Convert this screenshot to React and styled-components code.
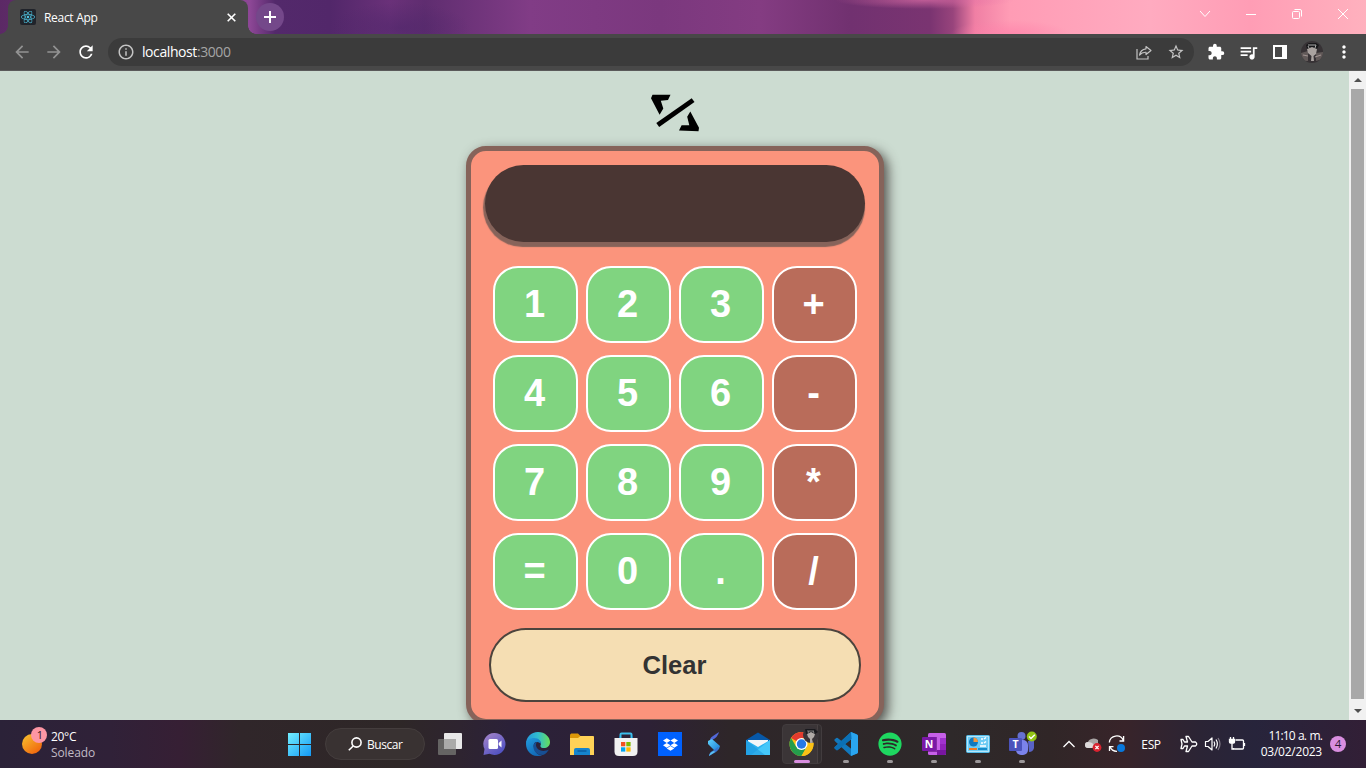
import React from "react";
import styled, { createGlobalStyle } from "styled-components";
import {
  MdExtension,
  MdQueueMusic,
  MdRefresh,
  MdArrowBack,
  MdArrowForward,
  MdInfoOutline,
  MdStarBorder,
  MdMoreVert,
} from "react-icons/md";
import { FaReact, FaSpotify, FaDropbox } from "react-icons/fa";

const GlobalStyle = createGlobalStyle`
  * { box-sizing: border-box; }
  body { margin: 0; overflow: hidden; }
  button { font: inherit; padding: 0; }
  svg { display: block; flex: none; }
`;

const Screen = styled.div`
  display: flex;
  flex-direction: column;
  width: 1366px;
  height: 768px;
  overflow: hidden;
  font-family: "Open Sans", "Noto Sans", sans-serif;
`;

/* ---------- browser chrome ---------- */

const TitleBar = styled.header`
  display: flex;
  align-items: flex-end;
  height: 34px;
  padding-left: 8px;
  background:
    radial-gradient(ellipse 60px 14px at 1010px 34px, #ff80a9aa, #ff80a900),
    radial-gradient(ellipse 90px 9px at 925px 0, #e070a8aa, #e070a800),
    radial-gradient(ellipse 70px 26px at 400px 28px, #4a256888, #4a256800),
    linear-gradient(90deg, #5b2965 0, #8d4796 250px, #53296b 275px, #52276a 330px, #6a3179 390px,
      #5f2d70 425px, #813c86 530px, #7b387e 660px, #843c82 760px, #713170 850px, #7a3471 930px,
      #98447c 953px, #f07fa4 975px, #ff9cb5 1010px, #ffabc0 1150px, #ff9db5 1250px, #ffb1be 1366px);
`;

const Tab = styled.div`
  position: relative;
  display: flex;
  align-items: center;
  width: 240px;
  height: 34px;
  padding: 0 12px 0 12px;
  border-radius: 8px 8px 0 0;
  background: #484848;
  color: #fff;
  font-size: 12px;

  &::before,
  &::after {
    content: "";
    position: absolute;
    bottom: 0;
    width: 8px;
    height: 8px;
  }
  &::before {
    left: -8px;
    background: radial-gradient(circle at 0 0, transparent 7.5px, #484848 8px);
  }
  &::after {
    right: -8px;
    background: radial-gradient(circle at 100% 0, transparent 7.5px, #484848 8px);
  }
`;

const Favicon = styled.span`
  display: grid;
  place-items: center;
  width: 16px;
  height: 16px;
  margin-right: 8px;
  border-radius: 2px;
  background: #20232a;
  color: #4fc3e0;
`;

const TabTitle = styled.span`
  flex: 1;
  letter-spacing: -0.3px;
`;

const NewTab = styled.span`
  display: grid;
  place-items: center;
  width: 28px;
  height: 28px;
  margin: 0 0 3px 8px;
  border-radius: 50%;
  background: #74488a;
`;

const WindowControls = styled.div`
  display: flex;
  align-self: flex-start;
  height: 28px;
  margin-left: auto;
`;

const WindowControl = styled.span`
  display: grid;
  place-items: center;
  width: 46px;
  height: 28px;
`;

const Toolbar = styled.div`
  display: flex;
  align-items: center;
  height: 37px;
  padding: 0 6px 0 12px;
  border-bottom: 1px solid #5a5a5a;
  background: #484848;
  color: #fff;
`;

const NavButton = styled.span`
  display: grid;
  place-items: center;
  width: 20px;
  height: 20px;
  margin-right: 12px;
  color: ${(p) => (p.$dim ? "#929292" : "#fff")};
`;

const AddressBar = styled.div`
  display: flex;
  flex: none;
  align-items: center;
  width: 1086px;
  height: 28px;
  padding: 0 9px 0 9px;
  border-radius: 14px;
  background: #3b3b3b;
  color: #c4c4c4;
`;

const Address = styled.span`
  flex: 1;
  margin: -1px 0 0 7px;
  font-size: 14px;
  letter-spacing: -0.42px;
  color: #fff;
  span { color: #a5a5a5; }
`;

const BarIcon = styled.span`
  display: grid;
  flex: none;
  place-items: center;
  width: 32px;
  height: 24px;
`;

const ShareButton = styled(BarIcon)`
  margin-right: 7px;
`;

const BarActions = styled.div`
  display: flex;
  margin-left: 6px;
`;

const Avatar = styled.span`
  display: block;
  width: 22px;
  height: 22px;
  border-radius: 50%;
  overflow: hidden;
`;

/* ---------- page ---------- */

const Viewport = styled.div`
  display: flex;
  height: 649px;
  overflow: hidden;
`;

const Page = styled.main`
  display: flex;
  flex: 1;
  flex-direction: column;
  align-items: center;
  padding: 23px 0 0 1px;
  background: #ccdcd1;
  overflow: hidden;
`;

const Scrollbar = styled.div`
  display: flex;
  flex-direction: column;
  align-items: center;
  width: 17px;
  background: #f1f1f1;
`;

const ScrollArrow = styled.span`
  display: grid;
  flex: none;
  place-items: center;
  width: 17px;
  height: ${(p) => (p.$end ? 21 : 18)}px;
  padding-top: ${(p) => (p.$end ? 3 : 0)}px;
`;

const ScrollThumb = styled.span`
  flex: none;
  width: 13px;
  height: 610px;
  background: #a8a8a8;
`;

const Calculator = styled.section`
  display: flex;
  flex: none;
  flex-direction: column;
  align-items: center;
  width: 418px;
  height: 578px;
  margin-top: 14px;
  padding-top: 14px;
  border: 5px solid #86635a;
  border-radius: 20px;
  background: #fb947c;
  box-shadow: 4px 4px 12px rgba(55, 50, 48, 0.8);
  font-family: "Liberation Sans", Arial, sans-serif;
`;

const Display = styled.div`
  flex: none;
  width: 380px;
  height: 77px;
  border-radius: 40px;
  background: #4a3633;
  box-shadow: -1px 4px 1px 1px #86635a;
`;

const Keys = styled.div`
  display: grid;
  grid-template-columns: repeat(4, 85px);
  grid-auto-rows: 77px;
  gap: 12px 8px;
  margin-top: 24px;
`;

const Key = styled.button`
  padding-right: 2px;
  border: 2px solid #fff;
  border-radius: 25px;
  background: ${(p) => (p.$operator ? "#b96c5a" : "#80d480")};
  color: #fff;
  font-size: 38px;
  font-weight: 700;
`;

const ClearButton = styled.button`
  flex: none;
  width: 372px;
  height: 74px;
  margin-top: 18px;
  padding-right: 1px;
  border: 2px solid #4c443d;
  border-radius: 37px;
  background: #f5deb3;
  color: #333;
  font-size: 25.6px;
  font-weight: 700;
`;

/* ---------- taskbar ---------- */

const Taskbar = styled.footer`
  display: flex;
  align-items: center;
  height: 48px;
  padding-right: 20px;
  background: linear-gradient(90deg, #2b2238 0, #302138 110px, #361f34 180px, #30262a 240px,
    #2e2727 400px, #2e2430 460px, #2b2139 510px, #2d2135 650px, #2e2629 730px, #2e292a 950px,
    #302627 1050px, #38242a 1125px, #2b2435 1200px, #27243b 1255px, #321f36 1366px);
  color: #fff;
`;

const Weather = styled.div`
  display: flex;
  align-items: center;
  width: 277px;
  padding-left: 20px;
`;

const WeatherText = styled.div`
  margin: 2px 0 0 3px;
  font-size: 12px;
  line-height: 16px;
  div:first-child { letter-spacing: -0.3px; }
  div:last-child { color: #c1bac6; letter-spacing: -0.1px; }
`;

const TaskItem = styled.span`
  position: relative;
  display: grid;
  place-items: center;
  width: 44px;
  height: 48px;

  &::after {
    content: "";
    display: ${(p) => (p.$running || p.$active ? "block" : "none")};
    position: absolute;
    bottom: 5px;
    left: calc(50% - ${(p) => (p.$active ? 8 : 3)}px);
    width: ${(p) => (p.$active ? 16 : 6)}px;
    height: 3px;
    border-radius: 2px;
    background: ${(p) => (p.$active ? "#d98ee0" : "#9b9799")};
  }
`;

const ActiveTile = styled.span`
  display: grid;
  place-items: center;
  width: 40px;
  height: 40px;
  border: 1px solid #423c3e;
  border-radius: 4px;
  background: linear-gradient(90deg, #3b3537 34px, #484143 34px, #484143 35px, #332e30 35px);
`;

const SearchBox = styled.div`
  display: flex;
  align-items: center;
  width: 100px;
  height: 32px;
  margin: 0 3px 0 4px;
  padding-left: 22px;
  border: 1px solid #443d3d;
  border-radius: 16px;
  background: #393232;
  font-size: 12px;
  letter-spacing: -0.45px;
  span { margin-left: 5px; }
`;

const Tray = styled.div`
  display: flex;
  align-items: center;
  margin-left: 13px;
`;

const TrayIcon = styled.span`
  display: grid;
  place-items: center;
  width: 24px;
  height: 24px;
`;

const Language = styled.span`
  width: 44px;
  margin-right: 4px;
  font-size: 12px;
  letter-spacing: -0.4px;
  text-align: center;
`;

const Clock = styled.div`
  margin-left: auto;
  font-size: 12px;
  line-height: 16px;
  text-align: right;
  div:first-child { letter-spacing: -0.85px; word-spacing: 1px; }
  div:last-child { letter-spacing: -0.24px; }
`;

const NoticeCount = styled.span`
  display: grid;
  place-items: center;
  width: 16px;
  height: 16px;
  margin-left: 8px;
  border-radius: 50%;
  background: #d98ee0;
  color: #2b1830;
  font-size: 11.5px;
  line-height: 16px;
`;

/* ---------- drawings ---------- */

const CatPicture = ({ size }) => (
  <svg width={size} height={size} viewBox="0 0 22 22">
    <rect width="22" height="22" fill="#373235" />
    <path d="M0 12L7 10V20H0zM15 12L22 11V18L15 20z" fill="#625a59" />
    <path d="M5 4L8 2H15L18 4L16 8L6 8z" fill="#171719" />
    <path d="M7 4H15M7 5L8 7M15 4L14 7" stroke="#aaa" strokeWidth="1" />
    <path d="M6 8L11 6L16 8L15 13L12.5 15L13 20H10L10.5 15L7 12z" fill="#aaa3a0" />
    <path d="M2 14L7 15M14 16L20 14" stroke="#a09391" strokeWidth="1.2" />
  </svg>
);

const Logo = () => (
  <svg width="48" height="38" viewBox="0 0 48 38" fill="#000">
    <path d="M1.5 0.8H19.5L17 6L9.8 6.700L12.300 14.500L8.600 20.800L0 4.200z" />
    <path d="M39.300 17.600L48 33.800L47.500 37.200L28 36.400L30.600 31.300H38.300L36.200 22.800z" />
    <path d="M5.300 29L40.700 4.200L43.500 8.100L8.200 33z" />
  </svg>
);

const WeatherIcon = () => (
  <svg width="28" height="34" viewBox="0 0 28 34">
    <defs>
      <linearGradient id="sun" x1="0" y1="0" x2="0.8" y2="1">
        <stop offset="0" stopColor="#f8c530" />
        <stop offset="1" stopColor="#f0620c" />
      </linearGradient>
    </defs>
    <circle cx="12" cy="17" r="10" fill="url(#sun)" />
    <circle cx="19" cy="8" r="8" fill="#fd96a4" />
    <text x="19.800" y="12" textAnchor="middle" fontSize="11" fill="#301820">1</text>
  </svg>
);

const StartIcon = () => (
  <svg width="24" height="24" viewBox="0 0 24 24">
    <defs>
      <linearGradient id="win" x1="0" y1="0" x2="1" y2="1">
        <stop offset="0" stopColor="#72efff" />
        <stop offset="1" stopColor="#1499f5" />
      </linearGradient>
    </defs>
    <path d="M1 1h11v11H1zM13 1h11v11H13zM1 13h11v11H1zM13 13h11v11H13z" fill="url(#win)" />
  </svg>
);

const SearchIcon = () => (
  <svg width="14" height="14" viewBox="0 0 14 14" fill="none" stroke="#fff" strokeWidth="1.6">
    <circle cx="8.5" cy="5.5" r="4.6" />
    <path d="M5.2 9L.8 13.3" />
  </svg>
);

const TaskViewIcon = () => (
  <svg width="24" height="24" viewBox="0 0 24 24">
    <rect x="6" y="1" width="18" height="16" rx="1" fill="#e8e8e8" />
    <rect x="0" y="7" width="18" height="16" rx="1" fill="#656463" />
    <rect x="6" y="7" width="12" height="10" fill="#aaaaa9" />
  </svg>
);

const ChatIcon = () => (
  <svg width="24" height="24" viewBox="0 0 24 24">
    <defs>
      <linearGradient id="chat" x1="0" y1="0" x2=".7" y2="1">
        <stop offset="0" stopColor="#a987c9" />
        <stop offset="1" stopColor="#4e50c2" />
      </linearGradient>
    </defs>
    <path d="M12.500 1a11 11 0 1 1-5 20.800L1.500 23l1-6A11 11 0 0 1 12.500 1z" fill="url(#chat)" />
    <rect x="6.500" y="7" width="9.500" height="10" rx="1.500" fill="#fff" />
    <path d="M16.700 11L19.500 8.500V15.500L16.700 13z" fill="#fff" />
  </svg>
);

const EdgeIcon = () => (
  <svg width="24" height="24" viewBox="0 0 24 24">
    <defs>
      <linearGradient id="edgeTop" x1="0" y1=".5" x2="1" y2=".5">
        <stop offset="0" stopColor="#2498dc" />
        <stop offset=".5" stopColor="#31bdcf" />
        <stop offset="1" stopColor="#67df58" />
      </linearGradient>
      <linearGradient id="edgeBody" x1="0" y1="0" x2=".6" y2="1">
        <stop offset="0" stopColor="#219cdf" />
        <stop offset="1" stopColor="#1267b5" />
      </linearGradient>
    </defs>
    <path d="M0 12C0 5 5 0 12 0s12 5 12 10c0 4-3 6-6 6-4 0-4-2-3-4 0-3-3-5-7-5-4 0-7 2-8 5z" fill="url(#edgeTop)" />
    <path d="M0 12c0-4 4-6 8-6 5 0 7 3 7 6-1-1-2-2-4-2-3 0-4 3-3 6 1 5 5 8 9 6.700C8 27 0 20 0 12z" fill="url(#edgeBody)" />
    <path d="M8 12c-2 6 2 11 9 11 3-1 5-4 6-5.500-6 3-12 1-13-4 0-2 .5-3 1-3.500C9.500 10 8.500 11 8 12z" fill="#174f94" />
  </svg>
);

const FolderIcon = () => (
  <svg width="24" height="24" viewBox="0 0 24 24">
    <path d="M0 3.500C0 2 1 1.500 2 1.500H8L10.500 4H22q2 0 2 2V9H0z" fill="#dc9708" />
    <path d="M0 6H8L10.500 4H23Q24 4 24 5V23H0z" fill="#ffd257" />
    <path d="M4 23V18Q4 16 6 16H18Q20 16 20 18V23z" fill="#1584cd" />
    <path d="M7.500 19H16.500" stroke="#08599b" strokeWidth="1.300" />
  </svg>
);

const StoreIcon = () => (
  <svg width="24" height="24" viewBox="0 0 24 24">
    <path d="M6.500 7V2.500Q6.500 1.500 7.500 1.500H16.500Q17.500 1.500 17.500 2.500V7" fill="none" stroke="#3cbdea" strokeWidth="2" />
    <path d="M.5 6H23.500V19.500Q23.500 24 19 24H5Q.5 24 .5 19.500z" fill="#f1f1f1" />
    <path d="M5.500 6V4.500M18.500 6V4.500" stroke="#1687bd" strokeWidth="1" />
    <path d="M7 10h4.300v4.300H7z" fill="#f25022" />
    <path d="M12.300 10h4.300v4.300h-4.300z" fill="#7fba00" />
    <path d="M7 15.300h4.300v4.300H7z" fill="#00a4ef" />
    <path d="M12.300 15.300h4.300v4.300h-4.300z" fill="#ffb900" />
  </svg>
);

const DropboxTile = styled.span`
  display: grid;
  place-items: center;
  width: 24px;
  height: 24px;
  background: #0061fe;
  color: #fff;
`;

const StreamIcon = () => (
  <svg width="24" height="24" viewBox="0 0 24 24">
    <defs>
      <linearGradient id="stream" x1="0" y1="0" x2="1" y2="1">
        <stop offset="0" stopColor="#60d6ff" />
        <stop offset="1" stopColor="#197bd2" />
      </linearGradient>
    </defs>
    <path d="M17 0Q16 5 10 8L8 11Q7 6 11 4z" fill="#5268d8" />
    <path d="M6 9L10 7L18 14L17 17L13 19L6 12z" fill="url(#stream)" />
    <path d="M7 24Q7 20 12 18L16 15Q18 17 14 20z" fill="#3976cf" />
    <path d="M7 24Q8 20 12 19L13 20z" fill="#5cc4f3" />
  </svg>
);

const MailIcon = () => (
  <svg width="24" height="24" viewBox="0 0 24 24">
    <path d="M0 8L12 .5L24 8V12H0z" fill="#0758a8" />
    <path d="M2 8H22V17H2z" fill="#f2f5f8" />
    <path d="M0 8L12 15L24 8V23H0z" fill="#2bb2ef" />
    <path d="M24 8L5 23H24z" fill="#45c7f9" />
    <path d="M0 8L19 23H0z" fill="#1c94db" opacity=".55" />
  </svg>
);

const ChromeIcon = () => (
  <svg width="36" height="34" viewBox="0 0 36 34">
    <circle cx="17.500" cy="17" r="12" fill="#fbc116" />
    <path d="M17.500 17L7.100 11A12 12 0 0 1 27.900 11H17.500z" fill="#e33b2e" />
    <path d="M7.100 11A12 12 0 0 0 17.500 29L22.700 20L17.500 17L12.300 20z" fill="#249d4c" />
    <path d="M27.900 11H17.500V17L22.700 20L17.500 29A12 12 0 0 0 27.900 11z" fill="#fbc116" />
    <circle cx="17.500" cy="17" r="6" fill="#fff" />
    <circle cx="17.500" cy="17" r="4.700" fill="#2678e6" />
    <clipPath id="profile"><circle cx="27" cy="8" r="8" /></clipPath>
    <g clipPath="url(#profile)">
      <rect x="19" width="16" height="16" fill="#393438" />
      <path d="M21 2H31L34 5L31 7H22z" fill="#19191d" />
      <path d="M23 4H30M24 6L25 4M30 6L29 4" stroke="#aaa" strokeWidth=".7" />
      <path d="M23 7L27 5L31 7L30 10L28 12L29 16H26L26 12L24 10z" fill="#b0aaa7" />
    </g>
  </svg>
);

const CodeIcon = () => (
  <svg width="24" height="24" viewBox="0 0 24 24">
    <path d="M17 0L23 2.500Q24 3 24 4V20Q24 21 23 21.500L17 24L.7 9Q0 8 .7 7.300L2.300 6Q3 5.500 3.700 6L17.500 17V7L3.700 18Q3 18.500 2.300 18L.7 16.600Q0 15.800 .7 15z" fill="#1278bd" />
    <path d="M17 0L23 2.500Q24 3 24 4V20Q24 21 23 21.500L17 24z" fill="#2aa5ef" />
    <path d="M17 0L17.500 7L3.700 18Q3 18.500 2.300 18L.7 16.600Q0 15.800 .7 15z" fill="#0b70b5" />
  </svg>
);

const OneNoteIcon = () => (
  <svg width="24" height="24" viewBox="0 0 24 24">
    <rect x="6" y="1" width="18" height="22" rx="1.500" fill="#c660e8" />
    <path d="M18 6H24V12H18z" fill="#a032ce" />
    <path d="M18 12H24V18H18z" fill="#9023ba" />
    <path d="M18 18H24V21.500Q24 23 22.500 23H15V18z" fill="#7816a0" />
    <rect x="6" y="5" width="9" height="15" fill="#862ea5" />
    <rect y="5" width="14" height="14" rx="1" fill="#7a18a7" />
    <text x="7" y="15.700" textAnchor="middle" fontSize="10.500" fontWeight="700" fill="#fff">N</text>
  </svg>
);

const ControlPanelIcon = () => (
  <svg width="24" height="24" viewBox="0 0 24 24">
    <rect x=".5" y="3.500" width="23" height="17" rx="1" fill="#b5e6fb" stroke="#51bae7" />
    <rect x="2" y="5" width="20" height="14" fill="#6dcbf4" />
    <circle cx="7.500" cy="10" r="4.500" fill="#1179be" />
    <path d="M7.500 10V5.500A4.500 4.500 0 0 1 12 10z" fill="#f7963b" />
    <path d="M15 7H17M15 11H17M18 7L20 5.500M18 11L20 9.500M14 14H20" stroke="#fff" strokeWidth="1.500" />
    <path d="M3 17H11" stroke="#f07920" strokeWidth="2" />
    <path d="M12 17H21" stroke="#168bc9" strokeWidth="2" />
  </svg>
);

const TeamsIcon = () => (
  <svg width="30" height="26" viewBox="0 0 30 26">
    <circle cx="14.500" cy="5" r="4" fill="#6570d1" />
    <rect x="9" y="9" width="12" height="15" rx="5" fill="#7b83eb" />
    <path d="M21 10H27V17Q26 21 22 21z" fill="#5963c7" />
    <rect x="2" y="7" width="13" height="13" rx="1" fill="#4b53bc" />
    <text x="8.500" y="17.200" textAnchor="middle" fontSize="10.500" fontWeight="700" fill="#fff">T</text>
    <circle cx="24.800" cy="5.500" r="5" fill="#92c414" />
    <path d="M22 5.500L24 7.500L27.800 3.700" fill="none" stroke="#fff" strokeWidth="1.400" />
  </svg>
);

const CloudIcon = () => (
  <svg width="18" height="16" viewBox="0 0 18 16">
    <path d="M4 12a3 3 0 0 1 0-6 6 5 0 0 1 10-2l0 8z" fill="#a9a5a5" />
    <path d="M4 12a3 3 0 0 1 0-6Q8 6 10 9L14 12z" fill="#dedada" />
    <circle cx="13" cy="11.500" r="4.400" fill="#d8222f" />
    <path d="M11.400 9.900L14.600 13.100M14.600 9.900L11.400 13.100" stroke="#fff" strokeWidth="1.300" />
  </svg>
);

const SyncIcon = () => (
  <svg width="18" height="18" viewBox="0 0 18 18" fill="none" stroke="#fff" strokeWidth="1.300">
    <path d="M1.300 7.500A7.300 7.300 0 0 1 15.300 5.500M15.600 1V6H11.500" />
    <path d="M2 11.500A7.300 7.300 0 0 0 9 16.300M1.500 16V11.700H5.500" />
    <circle cx="13" cy="13" r="4" fill="#0878dc" stroke="none" />
  </svg>
);

const PlaneIcon = () => (
  <svg width="18" height="18" viewBox="0 0 18 18" fill="none" stroke="#fff" strokeWidth="1.300" strokeLinejoin="round">
    <path d="M6 1.500H8.500L12 7H15.500Q18 9 15.500 11H12L8.500 16.500H6L7.500 11H4.500L3 13.500H1L2 9L1 4.500H3L4.500 7H7.500z" />
  </svg>
);

const SpeakerIcon = () => (
  <svg width="18" height="16" viewBox="0 0 18 16" fill="none" stroke="#fff" strokeWidth="1.200" strokeLinejoin="round">
    <path d="M1.500 5.500H4L8 2V14L4 10.500H1.500z" />
    <path d="M10 5.500Q11.500 8 10 10.500M12 3.500Q14.700 8 12 12.500" />
    <path d="M14 2Q18 8 14 14" stroke="#827b88" />
  </svg>
);

const BatteryIcon = () => (
  <svg width="18" height="16" viewBox="0 0 18 16" fill="none" stroke="#fff" strokeWidth="1.300">
    <path d="M7.500 4H14.500Q15.500 4 15.500 5V12Q15.500 13 14.500 13H6.500Q5.500 13 5.500 12M16.500 7V10" />
    <path d="M1.500 3.500H6.500V6Q6.500 7 5.500 7H2.500Q1.500 7 1.500 6z" fill="#fff" />
    <path d="M2.500 1V4M5.500 1V4M4 7V13H6" />
  </svg>
);

const KEYS = ["1", "2", "3", "+", "4", "5", "6", "-", "7", "8", "9", "*", "=", "0", ".", "/"];
const OPERATORS = ["+", "-", "*", "/"];

const BrowserChrome = () => (
  <>
    <TitleBar>
      <Tab>
        <Favicon><FaReact size={14} /></Favicon>
        <TabTitle>React App</TabTitle>
        <svg width="9" height="9" viewBox="0 0 9 9" stroke="#fff" strokeWidth="1.600">
          <path d="M.7.7L8.300 8.300M8.300.7L.7 8.300" />
        </svg>
      </Tab>
      <NewTab>
        <svg width="12" height="12" viewBox="0 0 12 12" stroke="#fff" strokeWidth="2">
          <path d="M6 0V12M0 6H12" />
        </svg>
      </NewTab>
      <WindowControls>
        <WindowControl>
          <svg width="12" height="8" viewBox="0 0 12 8" fill="none" stroke="#fff"><path d="M1 1L6 6.500L11 1" /></svg>
        </WindowControl>
        <WindowControl>
          <svg width="10" height="1"><rect width="10" height="1" fill="#fff" /></svg>
        </WindowControl>
        <WindowControl>
          <svg width="10" height="10" viewBox="0 0 10 10" fill="none" stroke="#fff">
            <rect x=".5" y="2.500" width="7" height="7" rx="1" />
            <path d="M2.500.5H8Q9.500.5 9.500 2V7.500" />
          </svg>
        </WindowControl>
        <WindowControl>
          <svg width="10" height="10" viewBox="0 0 10 10" stroke="#fff"><path d="M0 0L10 10M10 0L0 10" /></svg>
        </WindowControl>
      </WindowControls>
    </TitleBar>
    <Toolbar>
      <NavButton $dim><MdArrowBack size={20} /></NavButton>
      <NavButton $dim><MdArrowForward size={20} /></NavButton>
      <NavButton><MdRefresh size={20} /></NavButton>
      <AddressBar>
        <MdInfoOutline size={18} />
        <Address>localhost<span>:3000</span></Address>
        <ShareButton>
          <svg width="16" height="15" viewBox="0 0 16 15" fill="none" stroke="#c4c4c4" strokeWidth="1.200">
            <path d="M1 4V14H12V11" />
            <path d="M10 1.500L15 5.500L10 9.500V7.300Q6 7 3.500 10Q4.500 4.500 10 3.800z" strokeLinejoin="round" />
          </svg>
        </ShareButton>
        <MdStarBorder size={18} />
      </AddressBar>
      <BarActions>
        <BarIcon><MdExtension size={18} /></BarIcon>
        <BarIcon><MdQueueMusic size={21} /></BarIcon>
        <BarIcon>
          <svg width="14" height="14" viewBox="0 0 14 14"><path d="M0 0H14V14H0zM2 2V12H9V2z" fill="#fff" fillRule="evenodd" /></svg>
        </BarIcon>
        <BarIcon><Avatar><CatPicture size={22} /></Avatar></BarIcon>
        <BarIcon><MdMoreVert size={20} /></BarIcon>
      </BarActions>
    </Toolbar>
  </>
);

const CalculatorPage = () => (
  <Viewport>
    <Page>
      <Logo />
      <Calculator>
        <Display />
        <Keys>
          {KEYS.map((key) => (
            <Key key={key} $operator={OPERATORS.includes(key)}>{key}</Key>
          ))}
        </Keys>
        <ClearButton>Clear</ClearButton>
      </Calculator>
    </Page>
    <Scrollbar>
      <ScrollArrow>
        <svg width="8" height="4" viewBox="0 0 8 4"><path d="M0 4L4 0L8 4z" fill="#505050" /></svg>
      </ScrollArrow>
      <ScrollThumb />
      <ScrollArrow $end>
        <svg width="8" height="4" viewBox="0 0 8 4"><path d="M0 0L4 4L8 0z" fill="#505050" /></svg>
      </ScrollArrow>
    </Scrollbar>
  </Viewport>
);

const DesktopTaskbar = () => (
  <Taskbar>
    <Weather>
      <WeatherIcon />
      <WeatherText>
        <div>20°C</div>
        <div>Soleado</div>
      </WeatherText>
    </Weather>
    <TaskItem><StartIcon /></TaskItem>
    <SearchBox><SearchIcon /><span>Buscar</span></SearchBox>
    <TaskItem><TaskViewIcon /></TaskItem>
    <TaskItem><ChatIcon /></TaskItem>
    <TaskItem><EdgeIcon /></TaskItem>
    <TaskItem><FolderIcon /></TaskItem>
    <TaskItem><StoreIcon /></TaskItem>
    <TaskItem><DropboxTile><FaDropbox size={15} /></DropboxTile></TaskItem>
    <TaskItem><StreamIcon /></TaskItem>
    <TaskItem><MailIcon /></TaskItem>
    <TaskItem $active><ActiveTile><ChromeIcon /></ActiveTile></TaskItem>
    <TaskItem $running><CodeIcon /></TaskItem>
    <TaskItem $running><FaSpotify size={24} color="#1ed760" /></TaskItem>
    <TaskItem $running><OneNoteIcon /></TaskItem>
    <TaskItem $running><ControlPanelIcon /></TaskItem>
    <TaskItem $running><TeamsIcon /></TaskItem>
    <Tray>
      <TrayIcon>
        <svg width="12" height="8" viewBox="0 0 12 8" fill="none" stroke="#fff" strokeWidth="1.300"><path d="M.5 7L6 1.500L11.500 7" /></svg>
      </TrayIcon>
      <TrayIcon><CloudIcon /></TrayIcon>
      <TrayIcon><SyncIcon /></TrayIcon>
      <Language>ESP</Language>
      <TrayIcon><PlaneIcon /></TrayIcon>
      <TrayIcon><SpeakerIcon /></TrayIcon>
      <TrayIcon><BatteryIcon /></TrayIcon>
    </Tray>
    <Clock>
      <div>11:10 a. m.</div>
      <div>03/02/2023</div>
    </Clock>
    <NoticeCount>4</NoticeCount>
  </Taskbar>
);

export default function App() {
  return (
    <>
      <GlobalStyle />
      <Screen>
        <BrowserChrome />
        <CalculatorPage />
        <DesktopTaskbar />
      </Screen>
    </>
  );
}
